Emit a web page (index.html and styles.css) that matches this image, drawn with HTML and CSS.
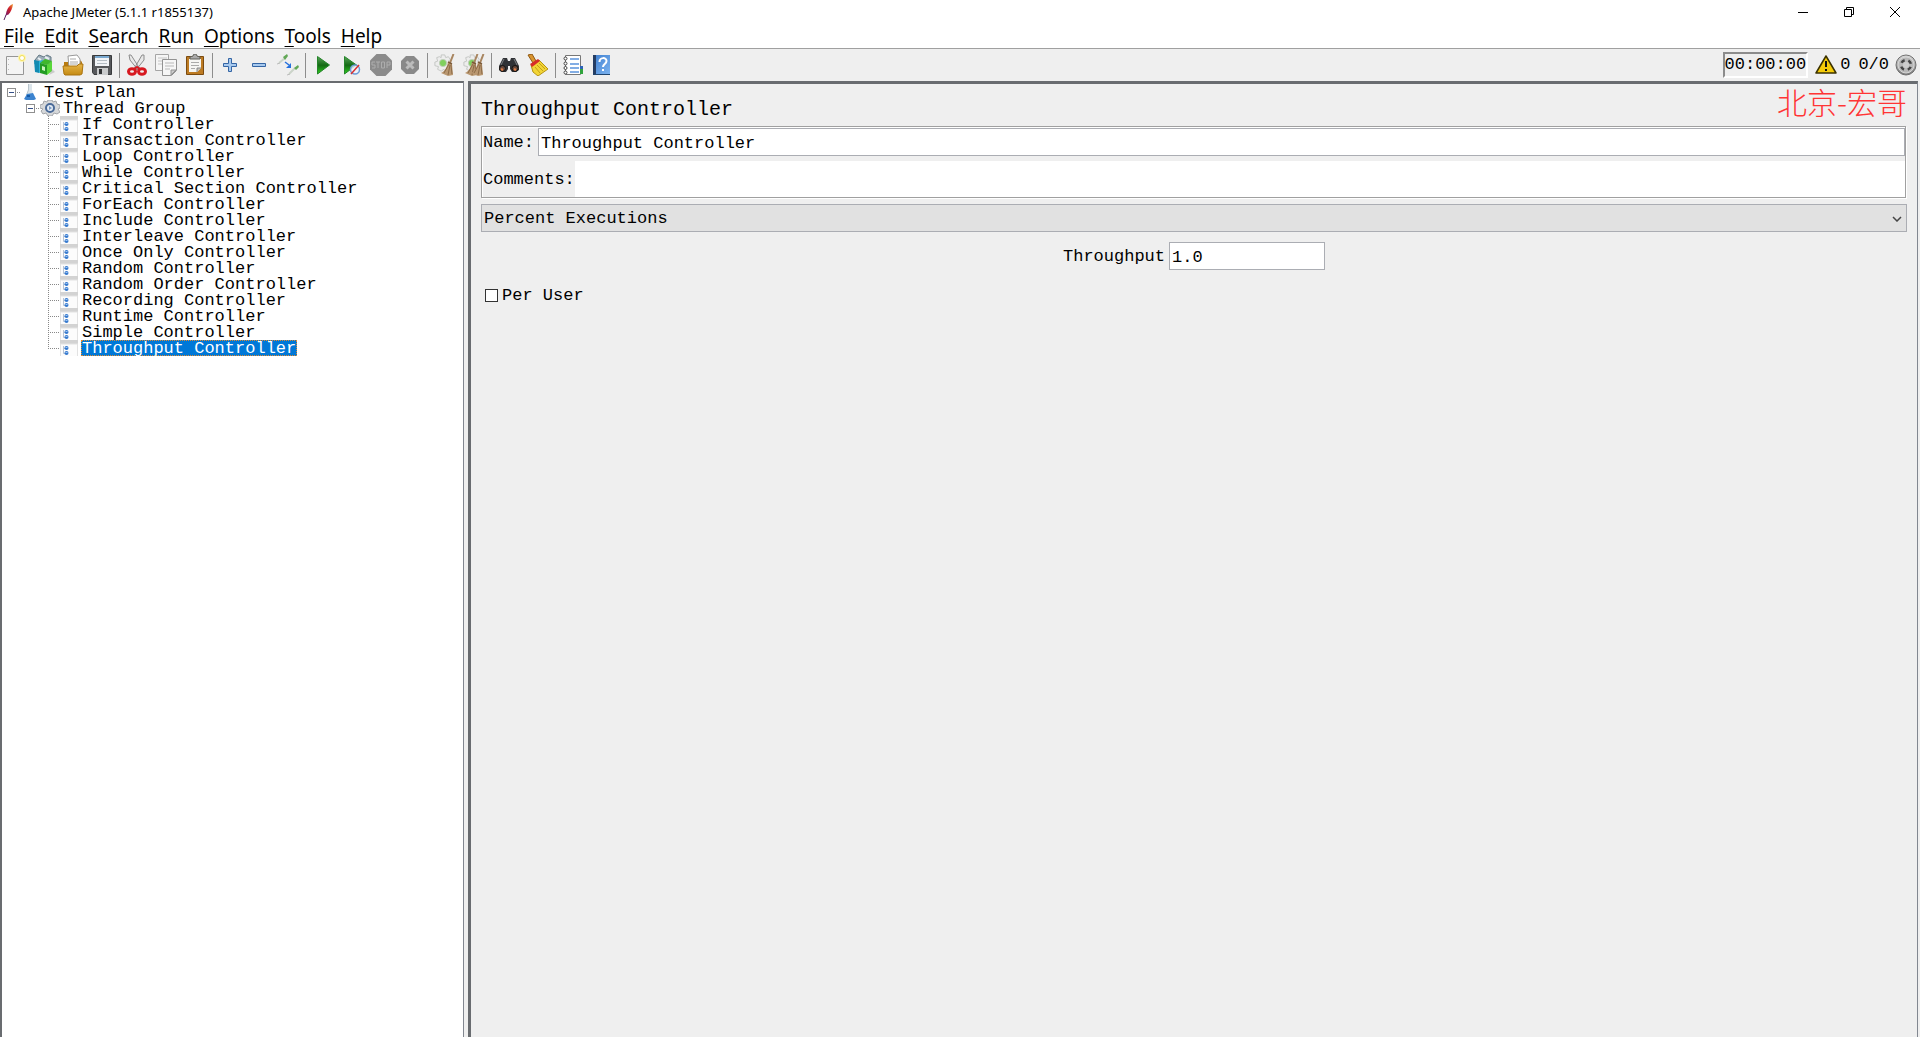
FILE: index.html
```html
<!DOCTYPE html>
<html lang="en">
<head>
<meta charset="utf-8">
<title>Apache JMeter (5.1.1 r1855137)</title>
<link rel="stylesheet" href="styles.css">
</head>
<body>
<svg class="defs" aria-hidden="true">
  <defs>
    <linearGradient id="green" x1="0" y1="0" x2="0" y2="1"><stop offset="0" stop-color="#5aa45a"/><stop offset=".5" stop-color="#146a14"/><stop offset="1" stop-color="#2fd01f"/></linearGradient>
    <linearGradient id="folder" x1="0" y1="0" x2="0" y2="1"><stop offset="0" stop-color="#e8b64a"/><stop offset="1" stop-color="#c48a12"/></linearGradient>
    <linearGradient id="book" x1="0" y1="0" x2="1" y2="1"><stop offset="0" stop-color="#3f7fd0"/><stop offset="1" stop-color="#7db4f0"/></linearGradient>
    <linearGradient id="steel" x1="0" y1="0" x2="0" y2="1"><stop offset="0" stop-color="#d8d8d8"/><stop offset="1" stop-color="#777"/></linearGradient>
    <linearGradient id="feather" x1="1" y1="0" x2="0" y2="1"><stop offset="0" stop-color="#f0a030"/><stop offset=".45" stop-color="#d0202a"/><stop offset="1" stop-color="#6a1a70"/></linearGradient>
    <symbol id="controller" viewBox="0 0 18 16">
      <path d="M0 0h18v16H0z" fill="#fcfcfc"/><path d="M0 0h18v4H0z" fill="#d3d3d3"/><path d="M0 4h18M.5 4v12M17.5 4v12" stroke="#e2e2e2"/>
      <path d="M3.500 6v7.500H5M3.500 8.500H5" fill="none" stroke="#b5c3d6"/>
      <circle cx="6.500" cy="8" r="2" fill="#3579cf"/><circle cx="6.500" cy="13" r="2" fill="#3579cf"/><path d="M5.500 7.500h2M5.500 12.500h2" stroke="#9cc4f2"/>
    </symbol>
    <symbol id="broom" viewBox="0 0 14 22">
      <path d="M12.500 0L9 9" stroke="#a88560" stroke-width="2"/><path d="M7 8l4 2 1 11-5 1-7-3c4-2 6-6 7-11z" fill="#b99770"/><path d="M8 10L3 19M9 11L7 21M10 11l1 9" stroke="#8d6c48" fill="none"/><path d="M7 8l4 2" stroke="#7b5b3b" stroke-width="1.500"/>
    </symbol>
    <symbol id="cog" viewBox="0 0 20 20">
      <path d="M8 1h4l1 3 3-1 2 3-2 2 3 2v3l-3 1 1 3-4 2-2-2-3 2-4-2 1-3-4-1V9l3-1-1-4 3-1 2 1z" fill="#ededed" stroke="#c2c4c2"/><circle cx="10" cy="10" r="4" fill="#7fd05e" stroke="#c0ccba"/>
    </symbol>
  </defs>
</svg>

<header class="titlebar">
  <svg class="app-icon" viewBox="0 0 16 18"><path d="M13 1C10 2 7.500 5 6.500 8.500L5.500 12.500l3-1c2.500-3 4-6 4.500-10.500z" fill="url(#feather)"/><path d="M6 12l-2 5" stroke="#5a2060"/></svg>
  <h1 class="app-title">Apache JMeter (5.1.1 r1855137)</h1>
  <div class="window-controls">
    <button aria-label="Minimize"><svg viewBox="0 0 12 12"><path d="M1 6.500h10" stroke="#000"/></svg></button>
    <button aria-label="Restore"><svg viewBox="0 0 12 12"><path d="M1.500 3.500h7v7h-7zM3.500 3V1.500h7v7H9" fill="none" stroke="#000"/></svg></button>
    <button aria-label="Close"><svg viewBox="0 0 12 12"><path d="M1 1l10 10M11 1L1 11" stroke="#000"/></svg></button>
  </div>
</header>

<nav class="menubar">
  <button><u>F</u>ile</button><button><u>E</u>dit</button><button><u>S</u>earch</button><button><u>R</u>un</button><button><u>O</u>ptions</button><button><u>T</u>ools</button><button><u>H</u>elp</button>
</nav>

<div class="toolbar">
  <div class="tools">
    <button aria-label="New"><svg viewBox="0 0 22 22"><path d="M2.500 2.500h17v18h-17z" fill="#f4f4f4" stroke="#969696"/><path d="M4.500 5v14" stroke="#bbb" stroke-dasharray="1 4"/><circle cx="18" cy="4" r="4" fill="#fdf6b0"/><circle cx="18" cy="4" r="2.500" fill="#fff" stroke="#f0dc55"/></svg></button>
    <button aria-label="Templates"><svg viewBox="0 0 22 22"><path d="M2 6L6 1l5 2 3-2 4 2v7H2z" fill="#9cadb8" stroke="#657985"/><path d="M5 4l3 2M12 3l4 2" stroke="#e8eef2" stroke-width="2"/><path d="M1 6l5 1v12l-4-1z" fill="#128bb2"/><path d="M6 7l4-1v12l-4 1z" fill="#2fb3d6"/><path d="M7 9l7 2v10l-7-2z" fill="#239b23"/><path d="M14 11l5-4v10l-5 4z" fill="#58d838"/><path d="M7 9l5-4 7 2-5 4z" fill="#3fb82c"/><path d="M9 12l3 1v4l-3-1z" fill="#c9f3bc"/><path d="M19 15l3 3-6 3z" fill="#999" opacity=".4"/></svg></button>
    <button aria-label="Open"><svg viewBox="0 0 22 22"><path d="M2 8h5l1-2h10l2 2v12H2z" fill="#b87b10"/><path d="M6 2l9-1 3 4v9H7z" fill="#fff" stroke="#999"/><path d="M8 5h6M8 8h8M8 10h8" stroke="#aaa"/><path d="M1 12h14l2-2h4l-1 10-2 1H3l-1-1z" fill="url(#folder)" stroke="#ab7410"/></svg></button>
    <button aria-label="Save"><svg viewBox="0 0 22 22"><path d="M1.500 1.500h19v19H3l-1.500-2z" fill="#56585b" stroke="#393b3d"/><path d="M4 2h14v10H4z" fill="#f1f4f7"/><path d="M4 2h14v2H4z" fill="#7aa9d0"/><path d="M6 6.500h10M6 9.500h10" stroke="#b4bdc4"/><path d="M6 14h11v7H6z" fill="#c9cbcc"/><path d="M8 15h3v5H8z" fill="#303234"/></svg></button>
    <span class="sep"></span>
    <button aria-label="Cut"><svg viewBox="0 0 22 22"><path d="M3 1l2 0 9 14-2 1L4 6zM18 1h-2L8 15l2 1 8-10z" fill="#e8e8e8" stroke="#8c8c8c"/><g fill="none" stroke="#d71920" stroke-width="3"><ellipse cx="6" cy="17.500" rx="3.500" ry="2.800"/><ellipse cx="16" cy="17.500" rx="3.500" ry="2.800"/></g><path d="M8 15l3-2 3 2" stroke="#d71920" stroke-width="2" fill="none"/></svg></button>
    <button aria-label="Copy"><svg viewBox="0 0 22 22"><path d="M.5.500h13v16H.5z" fill="#f5f5f5" stroke="#a5a5a5"/><path d="M3 4h9M3 7h9M3 10h5" stroke="#c5c5c5"/><path d="M7.500 5.500h14v11l-5 5h-9z" fill="#f6f6f6" stroke="#929292"/><path d="M21 16l-5 5v-5z" fill="#ccc" stroke="#929292"/><path d="M10 9h9M10 12h9M10 15h5" stroke="#b8b8b8"/></svg></button>
    <button aria-label="Paste"><svg viewBox="0 0 22 22"><path d="M2.500 2.500h17v18h-17z" fill="#bd7b23" stroke="#7b4b10"/><path d="M5 5h12v9l-4 4H5z" fill="#f5f5f3"/><path d="M13 18v-4h4" fill="#c5c5c0" stroke="#888"/><path d="M7 8.500h8M7 11.500h8M7 14.500h4" stroke="#aaa"/><path d="M6 5V3l3-1 1-2h2l1 2 3 1v2z" fill="#aaa" stroke="#61615b"/></svg></button>
    <span class="sep"></span>
    <button aria-label="Expand all"><svg viewBox="0 0 22 22"><path d="M9.500 4.500h3v5h5v3h-5v5h-3v-5h-5v-3h5z" fill="#a7c9ee" stroke="#3465a4"/></svg></button>
    <button aria-label="Collapse all"><svg viewBox="0 0 22 22"><path d="M4.500 9.500h13v3h-13z" fill="#a7c9ee" stroke="#3465a4"/></svg></button>
    <button aria-label="Toggle"><svg viewBox="0 0 22 22"><path d="M2 9L8 4M12 20l6-6" stroke="#cbd4c9" stroke-width="2"/><path d="M6 3l4-3 1 2-3 4zM17 14l4-3 1 2-3 3z" fill="#62a857"/><path d="M0 10l3-1M10 21l3-1" stroke="#bbb"/><path d="M8 8l4 3" stroke="#2671dd" stroke-width="1.500"/><path d="M14 9v5H9z" fill="#2671dd"/></svg></button>
    <span class="sep"></span>
    <button aria-label="Start"><svg viewBox="0 0 22 22"><path d="M5.500 2.500l12 8.500-12 9z" fill="url(#green)" stroke="#25852a"/></svg></button>
    <button aria-label="Start no pauses"><svg viewBox="0 0 22 22"><path d="M3.500 2.500l12 8.500-12 9z" fill="url(#green)" stroke="#25852a"/><circle cx="14" cy="15.500" r="4.500" fill="#edf3fb" fill-opacity=".8" stroke="#6b9cd8" stroke-width="1.500"/><path d="M10 20l8-9" stroke="#d83030" stroke-width="1.500"/></svg></button>
    <button aria-label="Stop" disabled><svg viewBox="0 0 22 22"><path d="M6.500 0h9L22 6.500v9L15.500 22h-9L0 15.500v-9z" fill="#8b8b8b"/><path d="M5 8H2v3h3v3H2M6 8h4M8 8v6M11.500 8h3v6h-3zM17 14V8h3v3h-3" fill="none" stroke="#adadad"/></svg></button>
    <button aria-label="Shutdown" disabled><svg viewBox="0 0 22 22"><path d="M7 2h8l5 5v8l-5 5H7l-5-5V7z" fill="#898989"/><path d="M7.500 7.500l7 7m0-7l-7 7" stroke="#bcbcbc" stroke-width="3"/></svg></button>
    <span class="sep"></span>
    <button aria-label="Clear"><svg viewBox="0 0 22 22"><use href="#cog" x="0" y="0" width="18" height="18"/><use href="#broom" x="7" y="0" width="14" height="22"/></svg></button>
    <button aria-label="Clear all"><svg viewBox="0 0 22 22"><use href="#cog" x="0" y="0" width="18" height="18"/><use href="#broom" x="2" y="0" width="14" height="22"/><use href="#broom" x="8" y="0" width="14" height="22"/></svg></button>
    <span class="sep"></span>
    <button aria-label="Search"><svg viewBox="0 0 22 22"><path d="M5 4h4l1 3h2l1-3h4l4 8v4l-3 2h-4l-2-3v-3h-2v3l-2 3H4l-3-2v-4z" fill="#303236"/><path d="M6 5l-3 6M16 5l3 6" stroke="#7c8084"/><circle cx="4.500" cy="14.500" r="3" fill="#66483b" stroke="#111"/><circle cx="17" cy="14.500" r="3" fill="#66483b" stroke="#111"/><path d="M3 15l2 1M16 15l2 1" stroke="#df7d46" stroke-width="2"/></svg></button>
    <button aria-label="Clear search"><svg viewBox="0 0 22 22"><path d="M1 1l4-1 4 7-3 2z" fill="#d9942f" stroke="#8f5914"/><path d="M4 11l8-5 9 9-10 7-5-4z" fill="#f2d535" stroke="#b69315"/><path d="M8 13l5 6M10 11l6 6M12 9l6 6" stroke="#c49f1a"/><path d="M3 10l8-5 2 2-8 6z" fill="#d72c28"/></svg></button>
    <span class="sep"></span>
    <button aria-label="Function helper"><svg viewBox="0 0 22 22"><path d="M3.500 1.500h15v19h-15z" fill="#fff" stroke="#777"/><path d="M18 12h3v3h-3z" fill="#2c62b8"/><path d="M18 15h3v5h-3z" fill="#30a33c"/><path d="M8 5h9M8 10h9M8 14h9M8 18h9" stroke="#5a93dc" stroke-width="1.500"/><g fill="#fff" stroke="#444"><circle cx="3.500" cy="4.500" r="1.500"/><circle cx="3.500" cy="9.500" r="1.500"/><circle cx="3.500" cy="14" r="1.500"/><circle cx="3.500" cy="18.500" r="1.500"/></g></svg></button>
    <button aria-label="Help"><svg viewBox="0 0 22 22"><path d="M2 1h17v20H2z" fill="url(#book)"/><path d="M2 1h3v20H2z" fill="#253d63"/><path d="M2 20h17v1H2z" fill="#20456e"/><path d="M8.500 8c0-5 7-5 7-1 0 3-3.500 3-3.500 6m0 2v2" fill="none" stroke="#fff" stroke-width="2"/></svg></button>
  </div>
  <div class="status">
    <output class="timer">00:00:00</output>
    <button aria-label="Log errors"><svg viewBox="0 0 22 22"><path d="M11 2L1 19h20z" fill="#f5cb08" stroke="#3b3200" stroke-linejoin="round" stroke-width="1.500"/><path d="M11 7v6M11 15v2" stroke="#111" stroke-width="2"/></svg></button>
    <span>0</span>
    <span class="threads">0/0</span>
    <svg viewBox="0 0 22 22"><circle cx="11" cy="11" r="10" fill="url(#steel)" stroke="#6f6f6f"/><circle cx="11" cy="11" r="8" fill="#b8b8b8" stroke="#d6d6d6"/><circle cx="11" cy="11" r="5" fill="none" stroke="#444" stroke-width="2.500" stroke-dasharray="4 3.850" transform="rotate(22 11 11)"/><circle cx="11" cy="11" r="3" fill="#ccc"/></svg>
  </div>
</div>

<main class="workspace">
  <aside class="tree">
    <ul>
      <li>
        <div class="row root"><button class="expander" aria-label="Collapse Test Plan"></button><span class="dash"></span><svg class="plan-icon" viewBox="0 0 16 16"><path d="M7 0h4v6l3 9H4l3-9z" fill="#dce5eb"/><path d="M7.500 0v6l-2 5" stroke="#b8c4cc" fill="none"/><path d="M6 10l6-1 3 6-2 1H5l-2-1z" fill="#3c83cf"/><path d="M6 12h3" stroke="#165aa5" stroke-width="2"/></svg><span class="label">Test Plan</span></div>
        <ul>
          <li>
            <div class="row group"><button class="expander" aria-label="Collapse Thread Group"></button><span class="dash"></span><svg class="group-icon" viewBox="0 0 20 16"><path d="M8 0h4l1 2 3-1 1 3 3 1v3l-2 1 2 3-3 2-3-1-2 3H8l-2-3-3 1-2-3 2-2-3-1V5l3-1 1-3 3 1z" fill="#d6d8da" stroke="#a2a5a9"/><circle cx="10" cy="8" r="4" fill="#e6edf5" stroke="#4a6a98" stroke-width="2"/><path d="M9 6l3 2-3 2z" fill="#7598c4"/></svg><span class="label">Thread Group</span></div>
            <ul class="leaves">
              <li class="row"><svg viewBox="0 0 18 16"><use href="#controller"/></svg><span class="label">If Controller</span></li>
              <li class="row"><svg viewBox="0 0 18 16"><use href="#controller"/></svg><span class="label">Transaction Controller</span></li>
              <li class="row"><svg viewBox="0 0 18 16"><use href="#controller"/></svg><span class="label">Loop Controller</span></li>
              <li class="row"><svg viewBox="0 0 18 16"><use href="#controller"/></svg><span class="label">While Controller</span></li>
              <li class="row"><svg viewBox="0 0 18 16"><use href="#controller"/></svg><span class="label">Critical Section Controller</span></li>
              <li class="row"><svg viewBox="0 0 18 16"><use href="#controller"/></svg><span class="label">ForEach Controller</span></li>
              <li class="row"><svg viewBox="0 0 18 16"><use href="#controller"/></svg><span class="label">Include Controller</span></li>
              <li class="row"><svg viewBox="0 0 18 16"><use href="#controller"/></svg><span class="label">Interleave Controller</span></li>
              <li class="row"><svg viewBox="0 0 18 16"><use href="#controller"/></svg><span class="label">Once Only Controller</span></li>
              <li class="row"><svg viewBox="0 0 18 16"><use href="#controller"/></svg><span class="label">Random Controller</span></li>
              <li class="row"><svg viewBox="0 0 18 16"><use href="#controller"/></svg><span class="label">Random Order Controller</span></li>
              <li class="row"><svg viewBox="0 0 18 16"><use href="#controller"/></svg><span class="label">Recording Controller</span></li>
              <li class="row"><svg viewBox="0 0 18 16"><use href="#controller"/></svg><span class="label">Runtime Controller</span></li>
              <li class="row"><svg viewBox="0 0 18 16"><use href="#controller"/></svg><span class="label">Simple Controller</span></li>
              <li class="row"><svg viewBox="0 0 18 16"><use href="#controller"/></svg><span class="label selected">Throughput Controller</span></li>
            </ul>
          </li>
        </ul>
      </li>
    </ul>
  </aside>

  <section class="editor">
    <div class="editor-head">
      <h2>Throughput Controller</h2>
      <span class="signature" lang="zh">北京-宏哥</span>
    </div>
    <div class="details">
      <div class="field"><label for="name">Name:</label><input id="name" class="boxed" type="text" value="Throughput Controller"></div>
      <div class="field comments"><label for="comments">Comments:</label><textarea id="comments" rows="1"></textarea></div>
    </div>
    <div class="select-wrap">
      <select aria-label="Execution style"><option>Percent Executions</option><option>Total Executions</option></select>
      <svg class="caret" viewBox="0 0 10 6"><path d="M1 1l4 4 4-4" fill="none" stroke="#444" stroke-width="1.500"/></svg>
    </div>
    <div class="throughput"><label for="throughput">Throughput</label><input id="throughput" class="boxed" type="text" value="1.0"></div>
    <div class="per-user"><input id="per-user" type="checkbox"><label for="per-user">Per User</label></div>
  </section>
</main>
</body>
</html>
```

FILE: styles.css
```css
:root {
  --mono: "Liberation Mono", "Noto Sans CJK SC", monospace;
  --ui: "Noto Sans", "Noto Sans CJK SC", sans-serif;
  --panel: #efefef;
  --line: #abadb3;
}

* {
  box-sizing: border-box;
}

body {
  margin: 0;
  min-height: 100vh;
  display: flex;
  flex-direction: column;
  background: #fff;
  color: #000;
  font: 17px/20px var(--mono);
}

button,
input,
textarea,
select {
  margin: 0;
  padding: 0;
  border: 0;
  border-radius: 0;
  background: none;
  color: inherit;
  font: inherit;
}

ul {
  margin: 0;
  padding: 0;
  list-style: none;
}

svg {
  display: block;
  flex: none;
}

.defs {
  position: absolute;
  width: 0;
  height: 0;
}

/* Title bar and menu */
.titlebar {
  display: flex;
  align-items: center;
  height: 24px;
  padding-right: 2px;
}

.app-icon {
  width: 16px;
  height: 18px;
}

.app-title {
  margin: 0 auto 0 7px;
  font: 13px/24px var(--ui);
}

.window-controls {
  display: flex;
}

.window-controls button {
  display: grid;
  place-items: center;
  width: 46px;
  height: 20px;
}

.window-controls svg {
  width: 12px;
  height: 12px;
}

.menubar {
  display: flex;
  gap: 10px;
  height: 24px;
  padding-left: 4px;
}

.menubar button {
  font: 19px/24px var(--ui);
}

.menubar u {
  text-underline-offset: 3px;
  text-decoration-thickness: 1px;
}

/* Toolbar */
.toolbar {
  display: flex;
  justify-content: space-between;
  height: 33px;
  padding-right: 3px;
  border-top: 1px solid #a0a0a0;
  background: var(--panel);
}

.tools,
.status {
  display: flex;
  align-items: center;
}

.tools button {
  display: grid;
  place-items: center;
  width: 29px;
  height: 29px;
}

.toolbar svg {
  width: 22px;
  height: 22px;
}

.sep {
  width: 6px;
  height: 25px;
  background: linear-gradient(#8d8d8d, #8d8d8d) center / 1px 100% no-repeat;
}

.timer {
  margin-right: 7px;
  border: 2px solid;
  border-color: #8c8c8c #fff #fff #8c8c8c;
  line-height: 22px;
}

.status span {
  margin-left: 3px;
}

.status .threads {
  margin: 0 6px 0 8px;
}

/* Workspace */
.workspace {
  flex: 1;
  display: grid;
  grid-template-columns: 464px minmax(0, 1fr);
  gap: 4px;
  padding-right: 2px;
  background: var(--panel);
}

.tree {
  border: solid #696c70;
  border-width: 2px 1px 0 2px;
  border-right-color: #828790;
  background: #fff;
  padding-top: 1px;
}

.row {
  display: flex;
  align-items: center;
  height: 16px;
}

.root {
  padding-left: 5px;
}

.group {
  padding-left: 24px;
}

.expander {
  flex: none;
  width: 9px;
  height: 9px;
  border: 1px solid #8f8f8f;
  background: linear-gradient(#344f88, #344f88) center / 5px 1px no-repeat #fff;
}

.dash {
  width: 5px;
  height: 1px;
  background: repeating-linear-gradient(90deg, transparent 0 1px, #888 1px 2px);
}

.plan-icon {
  width: 16px;
  height: 16px;
}

.group-icon {
  width: 20px;
  height: 16px;
}

.label {
  padding: 2px 3px 0;
  line-height: 18px;
  white-space: nowrap;
}

.root .label {
  padding-left: 7px;
}

.leaves {
  padding-left: 46px;
}

.leaves .row::before {
  content: "";
  width: 12px;
  height: 16px;
  background:
    repeating-linear-gradient(#888 0 1px, transparent 1px 2px) 0 0 / 1px 100% no-repeat,
    repeating-linear-gradient(90deg, #888 0 1px, transparent 1px 2px) 0 8px / 12px 1px no-repeat;
}

.leaves .row:last-child::before {
  background-size: 1px 8px, 12px 1px;
}

.leaves svg {
  width: 18px;
  height: 16px;
  margin-right: 3px;
}

.leaves .label {
  padding: 2px 1px 0;
}

.leaves .selected {
  height: 16px;
  padding: 0;
  border: 1px dotted #e08a30;
  background: #0078d7;
  color: #fff;
  line-height: 16px;
}

/* Editor */
.editor {
  display: flex;
  flex-direction: column;
  padding: 2px 10px 0 10px;
  border: solid #696c70;
  border-width: 3px 1px 0 3px;
  border-right-color: #828790;
}

.editor-head {
  display: flex;
  justify-content: space-between;
  height: 40px;
}

.editor-head h2 {
  margin: 0;
  font: 20px/48px var(--mono);
}

.signature {
  color: #ff3535;
  font: 300 30px/30px "Noto Sans CJK SC", sans-serif;
}

.details {
  display: flex;
  flex-direction: column;
  gap: 5px;
  margin-right: 1px;
  padding-top: 1px;
  border: 1px solid #a0a0a0;
  box-shadow: 1px 1px #fff, inset 1px 1px #fff;
}

.field {
  display: flex;
  align-items: center;
  gap: 4px;
  padding-left: 1px;
}

.editor label {
  padding-top: 2px;
}

.boxed {
  height: 28px;
  padding: 2px 2px 0;
  border: 1px solid var(--line);
  background: #fff;
}

.field input,
.field textarea {
  flex: 1;
  min-width: 0;
}

.comments {
  gap: 0;
}

.comments textarea {
  height: 36px;
  padding: 8px 3px;
  background: #fff;
  resize: none;
}

.select-wrap {
  position: relative;
  margin-top: 6px;
}

.select-wrap select {
  display: block;
  width: 100%;
  height: 28px;
  padding: 2px 2px 0;
  border: 1px solid var(--line);
  background: #e1e1e1;
  appearance: none;
}

.caret {
  position: absolute;
  right: 5px;
  top: 12px;
  width: 10px;
  height: 6px;
  pointer-events: none;
}

.throughput {
  display: flex;
  align-items: center;
  justify-content: center;
  gap: 4px;
  margin: 10px 0 14px;
}

.throughput input {
  width: 156px;
}

.per-user {
  display: flex;
  align-items: center;
  gap: 4px;
  align-self: flex-start;
  padding-left: 4px;
}

.per-user input {
  appearance: none;
  width: 13px;
  height: 13px;
  border: 1px solid #333;
  background: #fff;
}
```
